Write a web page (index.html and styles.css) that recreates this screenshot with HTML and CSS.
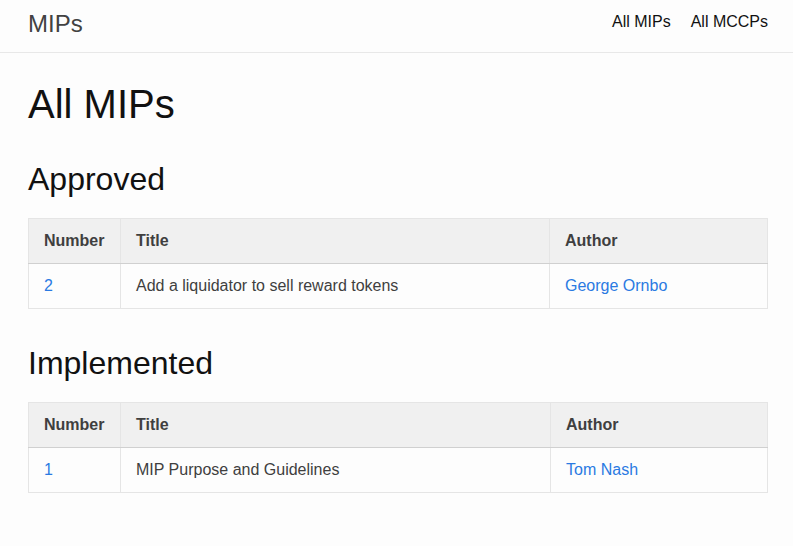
FILE: index.html
```html
<!DOCTYPE html>
<html lang="en">
<head>
<meta charset="utf-8">
<title>MIPs</title>
<link rel="stylesheet" href="styles.css">
</head>
<body>
<header class="navbar">
  <a class="brand" href="#">MIPs</a>
  <nav class="nav">
    <a class="nav-link" href="#">All MIPs</a>
    <a class="nav-link" href="#">All MCCPs</a>
  </nav>
</header>
<main class="content">
  <h1 class="page-title">All MIPs</h1>

  <h2 class="section-title">Approved</h2>
  <table class="mip-table">
    <colgroup>
      <col class="col-num">
      <col class="col-title">
      <col class="col-author">
    </colgroup>
    <thead>
      <tr><th>Number</th><th>Title</th><th>Author</th></tr>
    </thead>
    <tbody>
      <tr>
        <td><a class="link" href="#">2</a></td>
        <td>Add a liquidator to sell reward tokens</td>
        <td><a class="link" href="#">George Ornbo</a></td>
      </tr>
    </tbody>
  </table>

  <h2 class="section-title">Implemented</h2>
  <table class="mip-table">
    <colgroup>
      <col class="col-num">
      <col class="col-title2">
      <col class="col-author">
    </colgroup>
    <thead>
      <tr><th>Number</th><th>Title</th><th>Author</th></tr>
    </thead>
    <tbody>
      <tr>
        <td><a class="link" href="#">1</a></td>
        <td>MIP Purpose and Guidelines</td>
        <td><a class="link" href="#">Tom Nash</a></td>
      </tr>
    </tbody>
  </table>
</main>
</body>
</html>
```

FILE: styles.css
```css
html, body {
  margin: 0;
  padding: 0;
  background: #fdfdfd;
}
body {
  font-family: "Liberation Sans", Arial, sans-serif;
  font-size: 16px;
  color: #111;
}
a {
  text-decoration: none;
}
.navbar {
  box-sizing: content-box;
  height: 42px;
  border-bottom: 1px solid #e8e8e8;
  display: flex;
  justify-content: space-between;
  align-items: flex-start;
  padding: 10px 25px 0 28px;
}
.brand {
  font-size: 24px;
  line-height: 1.2;
  color: #424242;
}
.nav {
  display: flex;
  gap: 20px;
}
.nav-link {
  font-size: 16px;
  line-height: 1.5;
  color: #111;
}
.content {
  padding: 27px 25px 40px 28px;
}
.page-title {
  font-size: 40px;
  font-weight: 400;
  line-height: 1.2;
  margin: 0 0 32px;
  color: #111;
}
.section-title {
  font-size: 32px;
  font-weight: 400;
  line-height: 1.2;
  margin: 0 0 20px;
  color: #111;
}
.mip-table {
  width: 100%;
  border-collapse: collapse;
  margin: 0 0 34.4px;
  color: #3f3f3f;
}
.col-num { width: 92px; }
.col-title { width: 429px; }
.col-title2 { width: 430px; }
.mip-table th,
.mip-table td {
  border: 1px solid #e5e5e5;
  padding: 10px 15px;
  line-height: 24px;
  text-align: left;
}
.mip-table th {
  background: #f0f0f0;
  font-weight: 700;
  color: #3f3f3f;
  border-bottom-color: #d0d0d0;
}
.mip-table td {
  background: #fdfdfd;
}
.link {
  color: #2a7ae2;
}
```
